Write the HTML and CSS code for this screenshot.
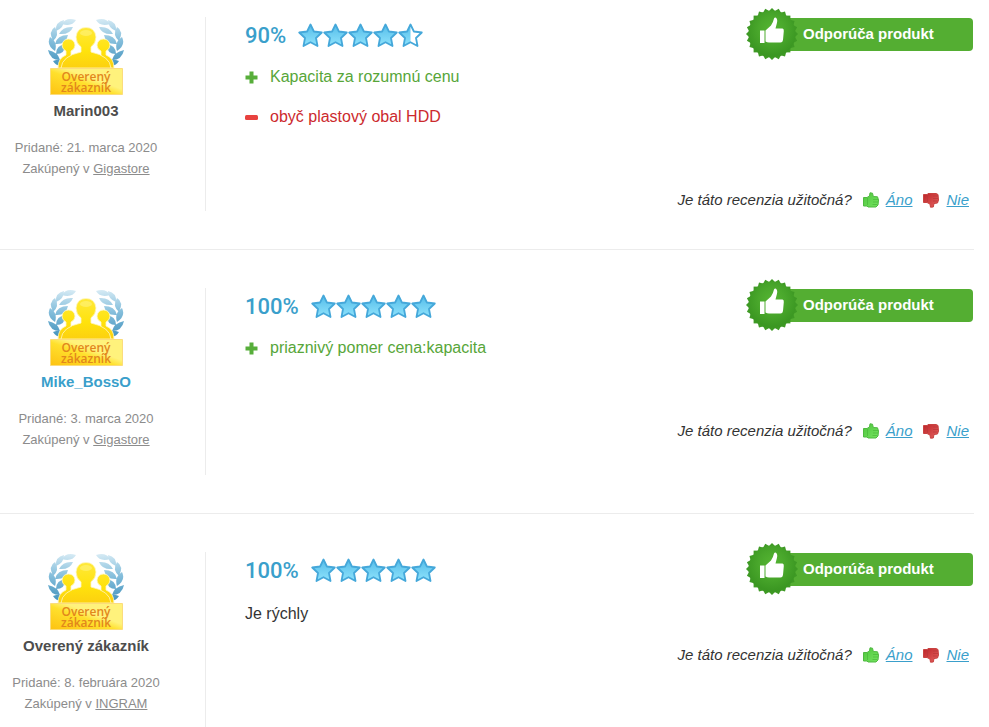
FILE: index.html
```
<!DOCTYPE html>
<html lang="sk">
<head>
  <meta charset="UTF-8">
  <meta name="viewport" content="width=device-width, initial-scale=1.0">
  <title>Recenzie produktu</title>
  <link rel="stylesheet" href="styles.css">
</head>
<body>
  <!-- Ikony -->
  <svg class="sprite" aria-hidden="true">
    <defs>
      <linearGradient id="starFill" x1="0" y1="0" x2="0" y2="1">
        <stop offset="0" stop-color="#54bce9"/>
        <stop offset="1" stop-color="#8fe3fc"/>
      </linearGradient>
      <radialGradient id="sealFill" cx="0.5" cy="0.4" r="0.55">
        <stop offset="0" stop-color="#55b532"/>
        <stop offset="0.5" stop-color="#4aa82c"/>
        <stop offset="1" stop-color="#3b9722"/>
      </radialGradient>
      <linearGradient id="people" gradientUnits="userSpaceOnUse" x1="0" y1="10" x2="0" y2="51">
        <stop offset="0" stop-color="#ffe93a"/>
        <stop offset="0.6" stop-color="#ffe20c"/>
        <stop offset="1" stop-color="#fcd010"/>
      </linearGradient>
      <linearGradient id="plate" x1="0" y1="1" x2="1" y2="0">
        <stop offset="0" stop-color="#fdc212"/>
        <stop offset="0.45" stop-color="#ffe02d"/>
        <stop offset="0.6" stop-color="#fff27c"/>
        <stop offset="1" stop-color="#fff27c"/>
      </linearGradient>
      <linearGradient id="leaf" gradientUnits="userSpaceOnUse" x1="14" y1="0" x2="8" y2="46">
        <stop offset="0" stop-color="#d5eaf4"/>
        <stop offset="0.5" stop-color="#86bfdc"/>
        <stop offset="1" stop-color="#4a97c0"/>
      </linearGradient>
      <linearGradient id="handUp" x1="0" y1="0" x2="1" y2="1">
        <stop offset="0" stop-color="#4fc53d"/>
        <stop offset="1" stop-color="#75e461"/>
      </linearGradient>
      <linearGradient id="handDown" x1="0" y1="0" x2="1" y2="1">
        <stop offset="0" stop-color="#bd2529"/>
        <stop offset="1" stop-color="#e5625f"/>
      </linearGradient>
    </defs>

    <symbol id="star" viewBox="0 0 25 25">
      <path d="M12.5 1.500 15.900 8.500 23.800 9.500 18 15 19.500 23 12.500 19.200 5.500 23 7 15 1.200 9.500 9.100 8.500Z" fill="url(#starFill)" stroke="#45a8da" stroke-width="1.800" stroke-linejoin="round"/>
    </symbol>

    <symbol id="star-half" viewBox="0 0 25 25">
      <path d="M12.500 1.500V19.200L5.500 23 7 15 1.200 9.500 9.100 8.500Z" fill="url(#starFill)"/>
      <path d="M12.5 1.500 15.900 8.500 23.800 9.500 18 15 19.500 23 12.500 19.200 5.500 23 7 15 1.200 9.500 9.100 8.500Z" fill="none" stroke="#45a8da" stroke-width="1.800" stroke-linejoin="round"/>
    </symbol>

    <symbol id="plus" viewBox="0 0 13 13">
      <path d="M4.5 0.5h4v4h4v4h-4v4h-4v-4h-4v-4h4z" fill="#57ae3a"/>
    </symbol>

    <symbol id="minus" viewBox="0 0 13 13">
      <rect x="0" y="4" width="13" height="5" rx="1.5" fill="#e8423f"/>
    </symbol>

    <symbol id="seal" viewBox="0 0 52 52">
      <g fill="#3f9a25">
        <rect x="7.600" y="7.600" width="36.800" height="36.800"/>
        <rect x="7.600" y="7.600" width="36.800" height="36.800" transform="rotate(15 26 26)"/>
        <rect x="7.600" y="7.600" width="36.800" height="36.800" transform="rotate(30 26 26)"/>
        <rect x="7.600" y="7.600" width="36.800" height="36.800" transform="rotate(45 26 26)"/>
        <rect x="7.600" y="7.600" width="36.800" height="36.800" transform="rotate(60 26 26)"/>
        <rect x="7.600" y="7.600" width="36.800" height="36.800" transform="rotate(75 26 26)"/>
      </g>
      <circle cx="26" cy="26" r="23.500" fill="url(#sealFill)"/>
      <path d="M14 22.500h4.500v12.500H14z" fill="#fff"/>
      <path d="M19.500 22.500 25 17.500Q27.300 14 28 10.500 28.800 9 30 9.800 32 11.500 30.800 15.500L29.500 20.500H36.500Q38 20.800 37.800 23L37 32Q36.600 34.500 34.500 34.500H23Q21 34.500 19.500 33.500Z" fill="#fff"/>
    </symbol>

    <symbol id="hand-up" viewBox="0 0 16 16">
      <path d="M0.500 5.500H4L6.500 4 7 0.800 9.500 1.200 10.300 4.500 14.500 4.800 15.500 8 15 13 13 15H5L4 14H0.500Z" fill="url(#handUp)" stroke="#4fb940" stroke-width="1"/>
      <path d="M4.500 6V13M10 7.500h5M10 10h5M9.500 12.500h4.500" stroke="#49b839" stroke-width="0.700" fill="none"/>
    </symbol>

    <symbol id="hand-down" viewBox="0 0 16 16">
      <path d="M0.500 2.500H4L5 1.500H13L15 2.500 15.500 8 14.500 11 11 11.500 10.300 15 7.500 15.200 7 12 4 10.500H0.500Z" fill="url(#handDown)" stroke="#c84341" stroke-width="1"/>
      <path d="M4.500 3V10M10 4h5M10 6.500h5M10 9h4.500" stroke="#b8383a" stroke-width="0.700" fill="none"/>
    </symbol>

    <symbol id="laurel" viewBox="0 0 28 50">
      <g fill="url(#leaf)">
        <path d="M28 2Q18-1 14 6 24 9 28 2Z"/>
        <path d="M16 2Q7 4 8 13 16 10 16 2Z"/>
        <path d="M25 9Q15 8 11 16 22 17 25 9Z"/>
        <path d="M7 9Q0 13 5 23 12 17 7 9Z"/>
        <path d="M20 17Q9 17 7 26 18 27 20 17Z"/>
        <path d="M2 19Q-2 27 7 33 10 24 2 19Z"/>
        <path d="M18 26Q8 27 8 36 17 36 18 26Z"/>
        <path d="M0 32Q2 42 12 42 10 34 0 32Z"/>
        <path d="M5 43Q10 51 19 45 13 39 5 43Z"/>
      </g>
    </symbol>

    <symbol id="verified" viewBox="0 0 76 80">
      <use href="#laurel" x="0" y="1" width="28" height="50"/>
      <use href="#laurel" x="0" y="1" width="28" height="50" transform="translate(76 0) scale(-1 1)"/>
      <g fill="url(#people)" stroke="#fff6c0" stroke-width="0.800">
        <path d="M10 51Q10 41 18 38V34Q14 32 14 28 15 22 20.500 22 26 22 27 28 27 32 23 34V51Z"/>
        <path d="M66 51Q66 41 58 38V34Q62 32 62 28 61 22 55.500 22 50 22 49 28 49 32 53 34V51Z"/>
        <path d="M13 51Q14 39 33 35V30Q28 26 28 20 29 10.500 38 10.500 47 10.500 48 20 48 26 43 30V35Q62 39 63 51Z"/>
      </g>
      <ellipse cx="38" cy="16" rx="6" ry="3" fill="#fff68b" opacity="0.500"/>
      <path d="M2.500 51.500h72v26h-72z" fill="url(#plate)" stroke="#fbdc7c" stroke-width="1"/>
    </symbol>
  </svg>

  <main class="reviews">
    <article class="review">
      <div class="author">
        <div class="author-badge">
          <svg><use href="#verified"/></svg>
          <span class="badge-text">Overený zákazník</span>
        </div>
        <strong class="author-name">Marin003</strong>
        <p class="author-info">Pridané: 21. marca 2020<br>Zakúpený v <a href="#">Gigastore</a></p>
      </div>
      <div class="content">
        <div class="review-head">
          <span class="score">90%</span>
          <span class="stars">
            <svg><use href="#star"/></svg><svg><use href="#star"/></svg><svg><use href="#star"/></svg><svg><use href="#star"/></svg><svg><use href="#star-half"/></svg>
          </span>
          <div class="recommend"><svg class="seal"><use href="#seal"/></svg>Odporúča produkt</div>
        </div>
        <ul class="points">
          <li class="pro"><svg><use href="#plus"/></svg>Kapacita za rozumnú cenu</li>
          <li class="con"><svg><use href="#minus"/></svg>obyč plastový obal HDD</li>
        </ul>
        <div class="useful">
          <span class="question">Je táto recenzia užitočná?</span>
          <svg><use href="#hand-up"/></svg><a class="yes" href="#">Áno</a>
          <svg><use href="#hand-down"/></svg><a href="#">Nie</a>
        </div>
      </div>
    </article>

    <article class="review">
      <div class="author">
        <div class="author-badge">
          <svg><use href="#verified"/></svg>
          <span class="badge-text">Overený zákazník</span>
        </div>
        <strong class="author-name"><a href="#">Mike_BossO</a></strong>
        <p class="author-info">Pridané: 3. marca 2020<br>Zakúpený v <a href="#">Gigastore</a></p>
      </div>
      <div class="content">
        <div class="review-head">
          <span class="score">100%</span>
          <span class="stars">
            <svg><use href="#star"/></svg><svg><use href="#star"/></svg><svg><use href="#star"/></svg><svg><use href="#star"/></svg><svg><use href="#star"/></svg>
          </span>
          <div class="recommend"><svg class="seal"><use href="#seal"/></svg>Odporúča produkt</div>
        </div>
        <ul class="points">
          <li class="pro"><svg><use href="#plus"/></svg>priaznivý pomer cena:kapacita</li>
        </ul>
        <div class="useful">
          <span class="question">Je táto recenzia užitočná?</span>
          <svg><use href="#hand-up"/></svg><a class="yes" href="#">Áno</a>
          <svg><use href="#hand-down"/></svg><a href="#">Nie</a>
        </div>
      </div>
    </article>

    <article class="review">
      <div class="author">
        <div class="author-badge">
          <svg><use href="#verified"/></svg>
          <span class="badge-text">Overený zákazník</span>
        </div>
        <strong class="author-name">Overený zákazník</strong>
        <p class="author-info">Pridané: 8. februára 2020<br>Zakúpený v <a href="#">INGRAM</a></p>
      </div>
      <div class="content">
        <div class="review-head">
          <span class="score">100%</span>
          <span class="stars">
            <svg><use href="#star"/></svg><svg><use href="#star"/></svg><svg><use href="#star"/></svg><svg><use href="#star"/></svg><svg><use href="#star"/></svg>
          </span>
          <div class="recommend"><svg class="seal"><use href="#seal"/></svg>Odporúča produkt</div>
        </div>
        <p class="comment">Je rýchly</p>
        <div class="useful">
          <span class="question">Je táto recenzia užitočná?</span>
          <svg><use href="#hand-up"/></svg><a class="yes" href="#">Áno</a>
          <svg><use href="#hand-down"/></svg><a href="#">Nie</a>
        </div>
      </div>
    </article>
  </main>
</body>
</html>
```
FILE: styles.css
```
* {
  padding: 0;
  margin: 0;
  box-sizing: border-box;
}

body {
  background: #fff;
  color: #333;
  font-family: "Liberation Sans", Arial, sans-serif;
  font-size: 16px;
}

a {
  color: #3a9fcb;
}

svg {
  flex: none;
}

.sprite {
  position: absolute;
  width: 0;
  height: 0;
}

.reviews {
  margin-right: 15px;
}

.review {
  display: flex;
  padding: 38px 0;
  border-bottom: 1px solid #ececec;
}

.review:first-child {
  padding-top: 17px;
}

.review:last-child {
  padding-bottom: 0;
  border-bottom: 0;
}

/* autor */
.author {
  width: 206px;
  flex: none;
  display: flex;
  flex-direction: column;
  align-items: center;
  padding: 0 33px 25px 0;
  border-right: 1px solid #ececec;
  text-align: center;
}

.author-badge {
  position: relative;
  width: 76px;
  height: 80px;
}

.author-badge svg {
  width: 76px;
  height: 80px;
}

.badge-text {
  position: absolute;
  right: 10px;
  bottom: 4px;
  left: 10px;
  font-family: "Open Sans", sans-serif;
  font-size: 12px;
  font-weight: 600;
  line-height: 11px;
  color: #e2871c;
}

.author-name {
  margin: 4px 0 16px;
  font-size: 15px;
  line-height: 20px;
  color: #4d4d4d;
}

.author-name a {
  text-decoration: none;
}

.author-info {
  font-size: 13px;
  line-height: 21px;
  color: #8c8c8c;
}

.author-info a {
  color: inherit;
}

/* obsah recenzie */
.content {
  flex: 1;
  padding-left: 39px;
}

.review-head {
  display: flex;
  align-items: center;
  height: 36px;
  margin-bottom: 12px;
}

.score {
  margin-right: 12px;
  font-family: Roboto, sans-serif;
  font-size: 22px;
  font-weight: 500;
  color: #3a9fcb;
}

.stars {
  display: flex;
}

.stars svg {
  width: 25px;
  height: 25px;
}

.recommend {
  position: relative;
  width: 201px;
  height: 33px;
  margin: 0 1px 2px auto;
  padding-left: 31px;
  border-radius: 4px;
  background: #54ae32;
  color: #fff;
  font-size: 15px;
  font-weight: bold;
  line-height: 32px;
}

.seal {
  position: absolute;
  top: -10px;
  left: -26px;
  width: 52px;
  height: 52px;
}

.points {
  display: grid;
  gap: 16px;
  margin-bottom: 60px;
  list-style: none;
}

.points li {
  display: flex;
  align-items: center;
  gap: 12px;
  line-height: 24px;
}

.points svg {
  width: 13px;
  height: 13px;
}

.pro {
  color: #57a639;
}

.con {
  color: #cc2a2d;
}

.comment {
  margin-bottom: 16px;
  line-height: 28px;
}

.useful {
  display: flex;
  justify-content: flex-end;
  align-items: center;
  gap: 7px;
  padding-right: 5px;
  font-size: 15px;
  font-style: italic;
  line-height: 22px;
}

.useful svg {
  width: 16px;
  height: 16px;
}

.question {
  margin-right: 4px;
}

.yes {
  margin-right: 4px;
}
```
